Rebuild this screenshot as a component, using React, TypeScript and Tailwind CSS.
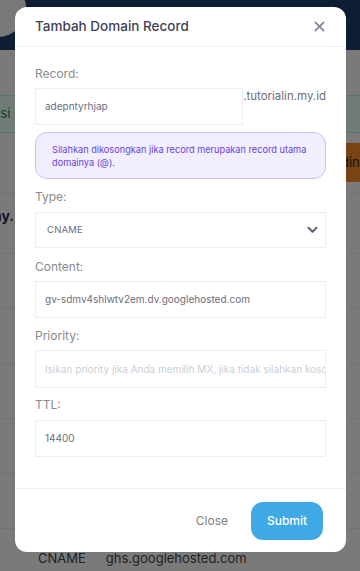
import React from "react";

const font = { fontFamily: "Inter, 'Open Sans', sans-serif" };

export default function App() {
  return (
    <div className="relative w-[360px] h-[571px] overflow-hidden bg-[#f4f5f7]" style={font}>
      {/* background page */}
      <div className="relative h-[50px] bg-[#183a68]">
        <div className="absolute -left-[30px] -top-[20px] w-[56px] h-[57px] rounded-full bg-[#f2f2f2]" />
      </div>
      <div className="pt-[45px]">
        <div className="h-[38px] border-y border-[#b9e8c9] bg-[#e4f8ec] flex items-center text-[13px] text-[#1e8e4a]">
          <span className="-ml-[7px]">asi</span>
        </div>
        <div className="flex justify-end mt-[10px] h-[39px]">
          <div className="w-[20px] h-[39px] bg-[#f0862a] flex items-center text-[13px] text-[#222] pl-[1px] overflow-hidden whitespace-nowrap">
            din
          </div>
        </div>
        <div className="mt-[11px] border-t border-[#e4e6ea] h-[60px] pt-[13px]">
          <div className="text-[14px] font-bold text-[#1f2a44] -ml-[7px] leading-[18px]">ny.</div>
        </div>
        <div className="border-t border-[#e4e6ea] h-[55px]" />
        <div className="border-t border-[#e4e6ea] h-[55px]" />
        <div className="border-t border-[#e4e6ea] h-[55px]" />
        <div className="border-t border-[#e4e6ea] h-[55px]" />
        <div className="border-t border-[#e4e6ea] h-[55px]" />
        <div className="border-t border-[#e4e6ea] pt-[20px] pl-[38px] flex gap-[20px] text-[13px] text-[#444]">
          <span>CNAME</span>
          <span>ghs.googlehosted.com</span>
        </div>
      </div>

      {/* overlay */}
      <div className="absolute inset-0 bg-black/50" />

      {/* modal */}
      <div className="absolute left-[15px] top-[7px] w-[331px] h-[545px] bg-white rounded-[12px] flex flex-col">
        <div className="h-[40px] border-b border-[#eff0f3] flex items-center justify-between pl-[20px] pr-[20px] shrink-0">
          <span className="text-[13.5px] font-medium text-[#3f4254]">Tambah Domain Record</span>
          <svg width="11" height="11" viewBox="0 0 12 12" className="mr-[1px]">
            <path d="M1.5 1.5 L10.5 10.5 M10.5 1.5 L1.5 10.5" stroke="#7e8299" strokeWidth="1.8" strokeLinecap="round" />
          </svg>
        </div>

        <div className="flex-1 px-[20px] pt-[18px] flex flex-col">
          <label className="text-[12px] leading-[18px] text-[#8a8a8a] mb-[5px]">Record:</label>
          <div className="flex items-start">
            <div className="w-[210px] h-[37px] border border-[#eceef2] flex items-center px-[9px] text-[10px] text-[#6b6e7a]">
              adepntyrhjap
            </div>
            <span className="text-[11.5px] leading-[18px] text-[#6b6e7a] mt-[-1px] whitespace-nowrap">.tutorialin.my.id</span>
          </div>

          <div className="mt-[7px] h-[47px] rounded-[12px] border border-[#c9bffb] bg-[#f1eefe] px-[16px] flex items-center">
            <p className="text-[9.2px] leading-[13px] text-[#6a3fe0] whitespace-nowrap">
              Silahkan dikosongkan jika record merupakan record utama
              <br />
              domainya (@).
            </p>
          </div>

          <label className="mt-[9px] text-[12px] leading-[18px] text-[#8a8a8a] mb-[6px]">Type:</label>
          <div className="h-[36px] border border-[#eceef2] flex items-center justify-between pl-[11px] pr-[7px]">
            <span className="text-[9.5px] text-[#6b6e7a] tracking-[0.2px]">CNAME</span>
            <svg width="11" height="8" viewBox="0 0 11 8">
              <path d="M1.5 1.8 L5.5 5.8 L9.5 1.8" stroke="#5e6278" strokeWidth="2" fill="none" strokeLinecap="round" strokeLinejoin="round" />
            </svg>
          </div>

          <label className="mt-[10px] text-[12px] leading-[18px] text-[#8a8a8a] mb-[5px]">Content:</label>
          <div className="h-[37px] border border-[#eceef2] flex items-center px-[9px] text-[10px] text-[#6b6e7a] whitespace-nowrap overflow-hidden">
            gv-sdmv4shlwtv2em.dv.googlehosted.com
          </div>

          <label className="mt-[9px] text-[12px] leading-[18px] text-[#8a8a8a] mb-[5px]">Priority:</label>
          <div className="h-[38px] border border-[#eceef2] flex items-center pl-[9px] pr-[8px] text-[10px] text-[#cdcfd6] whitespace-nowrap overflow-hidden">
            Isikan priority jika Anda memilih MX, jika tidak silahkan kosongkan
          </div>

          <label className="mt-[8px] text-[12px] leading-[18px] text-[#8a8a8a] mb-[6px]">TTL:</label>
          <div className="h-[37px] border border-[#eceef2] flex items-center px-[9px] text-[10px] text-[#6b6e7a]">
            14400
          </div>
        </div>

        <div className="h-[64px] border-t border-[#eff0f3] flex items-center justify-end pr-[23px] shrink-0">
          <span className="text-[12px] text-[#7e7e7e] mr-[23px]">Close</span>
          <div className="w-[72px] h-[38px] rounded-[12px] bg-[#3fa9e5] flex items-center justify-center text-[12px] font-medium text-white">
            Submit
          </div>
        </div>
      </div>
    </div>
  );
}
